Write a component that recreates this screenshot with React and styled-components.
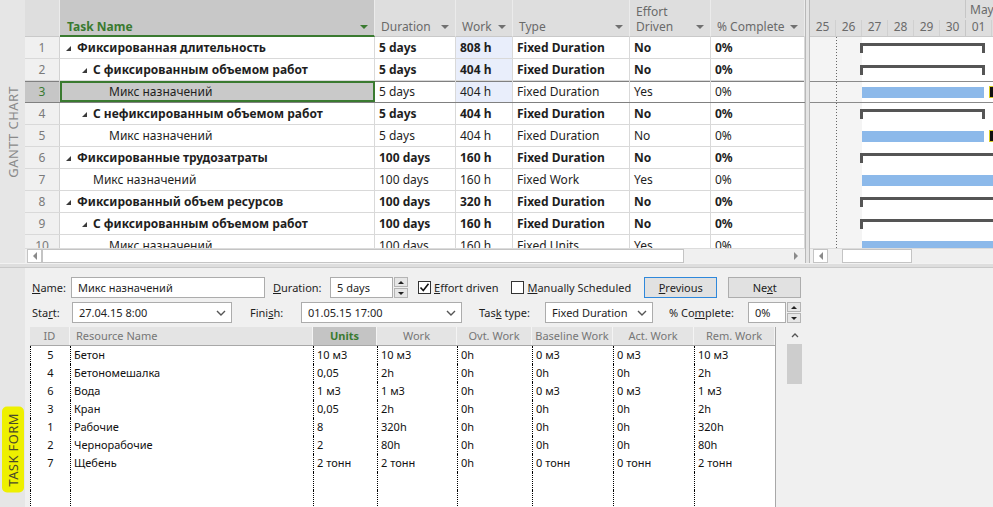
import React from 'react';
import styled, { createGlobalStyle, css } from 'styled-components';

const GlobalStyle = createGlobalStyle`
  html, body {
    margin: 0;
    padding: 0;
  }
  body {
    font-family: "Noto Sans", "Liberation Sans", sans-serif;
    font-size: 12px;
    color: #1e1e1e;
    overflow: hidden;
  }
`;

const TASK_COLS = '35px 315px 81px 57px 117px 81px 94px';
const RES_COLS = '40px 243px 64px 80px 75px 81px 81px 81px';
const GREEN = '#3a7a30';

const Screen = styled.div`
  width: 993px;
  height: 507px;
  display: flex;
  flex-direction: column;
  overflow: hidden;
  background: #e6e6e6;
`;

const GanttView = styled.div`
  height: 263px;
  display: flex;
  flex: none;
`;

const SideStrip = styled.div`
  width: 25px;
  flex: none;
  background: #e6e6e6;
  display: flex;
  justify-content: center;
  align-items: ${p => (p.$bottom ? 'flex-end' : 'center')};
  padding-bottom: ${p => (p.$bottom ? '14px' : '0')};
  box-sizing: border-box;
`;

const ViewLabel = styled.div`
  writing-mode: vertical-rl;
  transform: rotate(180deg);
  font-size: 13px;
  letter-spacing: 0.4px;
  color: ${p => (p.$marked ? '#4a4a2a' : '#8a8a8a')};
  white-space: nowrap;
  ${p =>
    p.$marked &&
    css`
      background: #eef000;
      padding: 6px 2px;
      border-radius: 5px;
    `}
`;

/* ---------- task sheet ---------- */

const SheetPane = styled.div`
  width: 780px;
  flex: none;
  display: flex;
  flex-direction: column;
  background: #fff;
`;

const SheetHeader = styled.div`
  display: grid;
  grid-template-columns: ${TASK_COLS};
  height: 37px;
  flex: none;
  background: #dedede;
`;

const HeadCell = styled.div`
  display: flex;
  align-items: flex-end;
  justify-content: space-between;
  padding: 0 6px 2px 6px;
  box-sizing: border-box;
  color: #6a6a6a;
  line-height: 15px;
  border-right: 1px solid #ebebeb;
  border-bottom: 1px solid #c9c9c9;
  ${p =>
    p.$active &&
    css`
      background: #c8c8c8;
      color: ${GREEN};
      font-weight: 700;
      padding-left: 7px;
      padding-bottom: 1px;
      border-bottom: 2px solid ${GREEN};
    `}
`;

const DropArrow = styled.span`
  flex: none;
  width: 0;
  height: 0;
  margin-bottom: 5px;
  border-left: 4px solid transparent;
  border-right: 4px solid transparent;
  border-top: 4px solid ${p => (p.$green ? GREEN : '#707070')};
`;

const SheetBody = styled.div`
  flex: 1;
  overflow: hidden;
`;

const TaskRow = styled.div`
  display: grid;
  grid-template-columns: ${TASK_COLS};
  height: 22px;
  box-sizing: border-box;
  border-bottom: 1px solid #d9d9d9;
  font-weight: ${p => (p.$bold ? 700 : 400)};
  ${p =>
    p.$selected &&
    css`
      border-bottom-color: #808080;
      & > div {
        box-shadow: inset 0 1px 0 #808080;
      }
    `}
`;

const Cell = styled.div`
  display: flex;
  align-items: center;
  padding: 0 4px;
  white-space: nowrap;
  overflow: hidden;
  border-right: 1px solid #d9d9d9;
  background: ${p => (p.$tint ? '#e9eefb' : 'transparent')};
`;

const RowNum = styled.div`
  display: flex;
  align-items: center;
  justify-content: center;
  font-weight: 400;
  color: ${p => (p.$selected ? GREEN : '#7a7a7a')};
  background: ${p => (p.$selected ? '#c6c6c6' : '#f0f0f0')};
  border-right: 1px solid #d2d2d2;
`;

const NameCell = styled(Cell)`
  padding-left: ${p => 5 + p.$level * 16}px;
  ${p =>
    p.$selected &&
    css`
      background: #c9c9c9;
      outline: 2px solid ${GREEN};
      outline-offset: -2px;
    `}
`;

const Spacer = styled.span`
  display: inline-block;
  width: 12px;
  flex: none;
`;

const ExpandGlyph = styled.span`
  flex: none;
  width: 0;
  height: 0;
  margin: 2px 6px 0 1px;
  border-style: solid;
  border-width: 0 0 5px 5px;
  border-color: transparent transparent #3a3a3a transparent;
`;

/* ---------- scroll bars ---------- */

const HScroll = styled.div`
  height: 15px;
  flex: none;
  display: flex;
  align-items: center;
  background: #f0f0f0;
  border-top: 1px solid #dcdcdc;
  box-sizing: border-box;
  padding: 0 2px;
`;

const ScrollBtn = styled.div`
  width: 15px;
  height: 14px;
  flex: none;
  display: flex;
  align-items: center;
  justify-content: center;
  box-sizing: border-box;
  background: ${p => (p.$flat ? 'transparent' : '#fff')};
  border: 1px solid ${p => (p.$flat ? 'transparent' : '#c4c4c4')};
  margin-left: ${p => p.$gap || 0}px;
`;

const Thumb = styled.div`
  height: 14px;
  flex: none;
  box-sizing: border-box;
  background: #fff;
  border: 1px solid #c4c4c4;
  margin-left: ${p => p.$gap || 0}px;
`;

const Tri = styled.span`
  width: 0;
  height: 0;
  border-top: 4px solid transparent;
  border-bottom: 4px solid transparent;
  ${p =>
    p.$right
      ? css`
          border-left: 4px solid #8a8a8a;
        `
      : css`
          border-right: 4px solid #8a8a8a;
        `}
`;

const Fill = styled.div`
  flex: 1;
`;

/* ---------- gantt chart ---------- */

const PaneDivider = styled.div`
  width: 5px;
  flex: none;
  box-sizing: border-box;
  background: #e4e4e4;
  border-left: 1px solid #b8b8b8;
  border-right: 1px solid #b8b8b8;
`;

const ChartPane = styled.div`
  flex: 1;
  min-width: 0;
  display: flex;
  flex-direction: column;
  overflow: hidden;
`;

const ChartHeader = styled.div`
  height: 37px;
  flex: none;
  background: #dedede;
  border-bottom: 1px solid #c9c9c9;
  box-sizing: border-box;
  display: flex;
  flex-direction: column;
  color: #6a6a6a;
`;

const Tier = styled.div`
  display: flex;
  height: ${p => p.$h}px;
  padding-top: ${p => p.$pad || 0}px;
  box-sizing: border-box;
`;

const MonthCell = styled.div`
  margin-left: ${p => p.$offset}px;
  padding-left: 4px;
  padding-top: 1px;
  border-left: 1px solid #c6c6c6;
  line-height: 17px;
  white-space: nowrap;
`;

const DayCell = styled.div`
  width: 26px;
  flex: none;
  box-sizing: border-box;
  border-right: 1px solid ${p => (p.$month ? '#c6c6c6' : '#d0d0d0')};
  text-align: center;
  line-height: 14px;
`;

const ChartBody = styled.div`
  flex: 1;
  overflow: hidden;
  background-color: #fff;
  background-image: repeating-linear-gradient(to bottom, #666 0 1px, transparent 1px 3px),
    linear-gradient(to right, #f4f4f4 0 52px, #fff 52px);
  background-size: 1px 100%, 100% 100%;
  background-position: 26px 0, 0 0;
  background-repeat: no-repeat;
`;

const ChartRow = styled.div`
  height: 22px;
  box-sizing: border-box;
  display: flex;
  align-items: flex-start;
  padding-top: 6px;
  white-space: nowrap;
  ${p =>
    p.$selected &&
    css`
      border-top: 1px solid #8a8a8a;
      border-bottom: 1px solid #8a8a8a;
      padding-top: 5px;
    `}
`;

const SummaryBar = styled.div`
  flex: none;
  height: 10px;
  box-sizing: border-box;
  border-top: 3px solid #555;
  border-left: 3px solid #555;
  border-right: ${p => (p.$open ? 'none' : '3px solid #555')};
`;

const TaskBar = styled.div`
  flex: none;
  height: 11px;
  background: #8cb9ea;
`;

const BarLabel = styled.div`
  flex: none;
  width: 4px;
  height: 10px;
  margin-left: 6px;
  background: #111;
  box-shadow: 0 0 0 1px #d8cc20;
`;

const ChartScroll = styled(HScroll)`
  padding-left: 3px;
`;

/* ---------- splitter + task form ---------- */

const Splitter = styled.div`
  height: 5px;
  flex: none;
  box-sizing: border-box;
  background: #dedede;
  border-top: 1px solid #f2f2f2;
  border-bottom: 1px solid #c9c9c9;
`;

const FormView = styled.div`
  flex: 1;
  display: flex;
  min-height: 0;
`;

const FormBody = styled.div`
  flex: 1;
  display: flex;
  flex-direction: column;
  background: #f0f0f0;
  padding: 9px 0 0 5px;
  min-width: 0;
  font-size: 11px;
  color: #1e1e1e;
`;

const FieldRow = styled.div`
  display: flex;
  align-items: center;
  height: 21px;
  padding-left: 2px;
  margin-bottom: ${p => p.$mb}px;
`;

const FieldLabel = styled.label`
  flex: none;
  width: ${p => p.$w}px;
  margin-left: ${p => p.$gap || 0}px;
  white-space: nowrap;
`;

const TextBox = styled.div`
  flex: none;
  width: ${p => p.$w}px;
  height: 21px;
  box-sizing: border-box;
  background: #fff;
  border: 1px solid #acacac;
  padding: 0 5px 0 6px;
  display: flex;
  align-items: center;
  justify-content: space-between;
  white-space: nowrap;
`;

const Spin = styled.div`
  flex: none;
  width: 14px;
  height: 21px;
  margin-left: 1px;
  display: flex;
  flex-direction: column;
  gap: 1px;
`;

const SpinHalf = styled.div`
  flex: 1;
  box-sizing: border-box;
  background: #e6e6e6;
  border: 1px solid #b4b4b4;
  display: flex;
  align-items: center;
  justify-content: center;
`;

const SpinTri = styled.span`
  width: 0;
  height: 0;
  border-left: 3px solid transparent;
  border-right: 3px solid transparent;
  ${p =>
    p.$down
      ? css`
          border-top: 3px solid #222;
        `
      : css`
          border-bottom: 3px solid #222;
        `}
`;

const CheckBox = styled.span`
  flex: none;
  width: 13px;
  height: 13px;
  box-sizing: border-box;
  background: #fff;
  border: 1px solid #333;
  margin-left: ${p => p.$gap || 0}px;
  margin-right: 3px;
  display: flex;
  align-items: center;
  justify-content: center;
`;

const CheckText = styled.span`
  white-space: nowrap;
`;

const Button = styled.div`
  flex: none;
  width: 73px;
  height: 21px;
  box-sizing: border-box;
  margin-left: ${p => p.$gap}px;
  background: #e1e1e1;
  border: 1px solid ${p => (p.$focus ? '#2f88db' : '#adadad')};
  display: flex;
  align-items: center;
  justify-content: center;
`;

const ResourceArea = styled.div`
  flex: 1;
  display: flex;
  align-items: stretch;
  min-height: 0;
`;

const ResTable = styled.div`
  flex: none;
  display: flex;
  flex-direction: column;
  background: #fff;
  border-right: 1px solid #a8a8a8;
  overflow: hidden;
`;

const ResHeadRow = styled.div`
  display: grid;
  grid-template-columns: ${RES_COLS};
  height: 19px;
  flex: none;
  box-sizing: border-box;
  background: #e4e4e4;
  border-bottom: 1px solid #a8a8a8;
  color: #767676;
`;

const ResHead = styled.div`
  line-height: 18px;
  text-align: ${p => (p.$left ? 'left' : 'center')};
  padding-left: ${p => (p.$left ? '6px' : '0')};
  border-right: 1px solid #f4f4f4;
  white-space: nowrap;
  overflow: hidden;
  ${p =>
    p.$active &&
    css`
      background: #c4c4c4;
      color: ${GREEN};
      font-weight: 700;
    `}
`;

const ResRow = styled.div`
  display: grid;
  grid-template-columns: ${RES_COLS};
  height: 18px;
  flex: none;
  color: #111;
`;

const ResCell = styled.div`
  line-height: 18px;
  padding-left: 3px;
  border-left: 1px dotted #000;
  text-align: ${p => (p.$center ? 'center' : 'left')};
  padding-right: ${p => (p.$center ? '3px' : '0')};
  white-space: nowrap;
  overflow: hidden;
`;

const VScroll = styled.div`
  width: 15px;
  flex: none;
  margin-left: 11px;
  display: flex;
  flex-direction: column;
  background: #f0f0f0;
`;

const VScrollBtn = styled.div`
  height: 17px;
  display: flex;
  align-items: center;
  justify-content: center;
`;

const VThumb = styled.div`
  height: 40px;
  background: #cdcdcd;
`;

/* ---------- data ---------- */

const tasks = [
  { id: 1, name: 'Фиксированная длительность', level: 0, summary: true, dur: '5 days', work: '808 h', type: 'Fixed Duration', eff: 'No', tint: true, bar: 'sum' },
  { id: 2, name: 'С фиксированным объемом работ', level: 1, summary: true, dur: '5 days', work: '404 h', type: 'Fixed Duration', eff: 'No', tint: true, bar: 'sum' },
  { id: 3, name: 'Микс назначений', level: 2, dur: '5 days', work: '404 h', type: 'Fixed Duration', eff: 'Yes', tint: true, selected: true, bar: 'task' },
  { id: 4, name: 'С нефиксированным объемом работ', level: 1, summary: true, dur: '5 days', work: '404 h', type: 'Fixed Duration', eff: 'No', bar: 'sum' },
  { id: 5, name: 'Микс назначений', level: 2, dur: '5 days', work: '404 h', type: 'Fixed Duration', eff: 'No', bar: 'task' },
  { id: 6, name: 'Фиксированные трудозатраты', level: 0, summary: true, dur: '100 days', work: '160 h', type: 'Fixed Duration', eff: 'No', bar: 'sumOpen' },
  { id: 7, name: 'Микс назначений', level: 1, dur: '100 days', work: '160 h', type: 'Fixed Work', eff: 'Yes', bar: 'taskOpen' },
  { id: 8, name: 'Фиксированный объем ресурсов', level: 0, summary: true, dur: '100 days', work: '320 h', type: 'Fixed Duration', eff: 'No', bar: 'sumOpen' },
  { id: 9, name: 'С фиксированным объемом работ', level: 1, summary: true, dur: '100 days', work: '160 h', type: 'Fixed Duration', eff: 'No', bar: 'sumOpen' },
  { id: 10, name: 'Микс назначений', level: 2, dur: '100 days', work: '160 h', type: 'Fixed Units', eff: 'Yes', bar: 'taskOpen' },
];

const headers = [
  { key: 'num', label: '' },
  { key: 'name', label: 'Task Name', active: true },
  { key: 'dur', label: 'Duration' },
  { key: 'work', label: 'Work' },
  { key: 'type', label: 'Type' },
  { key: 'eff', label: ['Effort', 'Driven'] },
  { key: 'pct', label: '% Complete' },
];

const days = ['25', '26', '27', '28', '29', '30', '01'];

const resources = [
  ['5', 'Бетон', '10 м3', '10 м3', '0h', '0 м3', '0 м3', '10 м3'],
  ['4', 'Бетономешалка', '0,05', '2h', '0h', '0h', '0h', '2h'],
  ['6', 'Вода', '1 м3', '1 м3', '0h', '0 м3', '0 м3', '1 м3'],
  ['3', 'Кран', '0,05', '2h', '0h', '0h', '0h', '2h'],
  ['1', 'Рабочие', '8', '320h', '0h', '0h', '0h', '320h'],
  ['2', 'Чернорабочие', '2', '80h', '0h', '0h', '0h', '80h'],
  ['7', 'Щебень', '2 тонн', '2 тонн', '0h', '0 тонн', '0 тонн', '2 тонн'],
  ['', '', '', '', '', '', '', ''],
  ['', '', '', '', '', '', '', ''],
];

const resHeaders = ['ID', 'Resource Name', 'Units', 'Work', 'Ovt. Work', 'Baseline Work', 'Act. Work', 'Rem. Work'];

// bar geometry in px from the chart's left edge (day 25 starts at 0, 26px a day)
const barShapes = {
  sum: { left: 50, width: 125 },
  sumOpen: { left: 50, width: 240 },
  task: { left: 52, width: 122 },
  taskOpen: { left: 52, width: 240 },
};

function Chevron() {
  return (
    <svg width="10" height="6" viewBox="0 0 10 6">
      <path d="M1 1 L5 5 L9 1" fill="none" stroke="#555" strokeWidth="1.4" />
    </svg>
  );
}

function Tick() {
  return (
    <svg width="11" height="11" viewBox="0 0 11 11">
      <path d="M1.5 5.5 L4.3 8.5 L9.5 1.8" fill="none" stroke="#111" strokeWidth="1.6" />
    </svg>
  );
}

function Spinner() {
  return (
    <Spin>
      <SpinHalf>
        <SpinTri />
      </SpinHalf>
      <SpinHalf>
        <SpinTri $down />
      </SpinHalf>
    </Spin>
  );
}

function GanttBar({ kind }) {
  const shape = barShapes[kind];
  const style = { marginLeft: shape.left, width: shape.width };
  if (kind === 'sum' || kind === 'sumOpen') {
    return <SummaryBar style={style} $open={kind === 'sumOpen'} />;
  }
  return (
    <>
      <TaskBar style={style} />
      {kind === 'task' && <BarLabel />}
    </>
  );
}

function TaskSheet() {
  return (
    <SheetPane>
      <SheetHeader>
        {headers.map(h => (
          <HeadCell key={h.key} $active={h.active}>
            <span>
              {Array.isArray(h.label)
                ? h.label.map(l => (
                    <div key={l}>{l}</div>
                  ))
                : h.label}
            </span>
            {h.key !== 'num' && <DropArrow $green={h.active} />}
          </HeadCell>
        ))}
      </SheetHeader>
      <SheetBody>
        {tasks.map(t => (
          <TaskRow key={t.id} $bold={t.summary} $selected={t.selected}>
            <RowNum $selected={t.selected}>{t.id}</RowNum>
            <NameCell $level={t.level} $selected={t.selected}>
              {t.summary ? <ExpandGlyph /> : <Spacer />}
              {t.name}
            </NameCell>
            <Cell>{t.dur}</Cell>
            <Cell $tint={t.tint}>{t.work}</Cell>
            <Cell>{t.type}</Cell>
            <Cell>{t.eff}</Cell>
            <Cell>0%</Cell>
          </TaskRow>
        ))}
      </SheetBody>
      <HScroll>
        <ScrollBtn>
          <Tri />
        </ScrollBtn>
        <Thumb style={{ width: 642 }} />
        <Fill />
        <ScrollBtn $flat>
          <Tri $right />
        </ScrollBtn>
      </HScroll>
    </SheetPane>
  );
}

function GanttChart() {
  return (
    <ChartPane>
      <ChartHeader>
        <Tier $h={18}>
          <MonthCell $offset={155}>May</MonthCell>
        </Tier>
        <Tier $h={18} $pad={2}>
          {days.map((d, i) => (
            <DayCell key={d} $month={i === 5}>
              {d}
            </DayCell>
          ))}
        </Tier>
      </ChartHeader>
      <ChartBody>
        {tasks.map(t => (
          <ChartRow key={t.id} $selected={t.selected}>
            <GanttBar kind={t.bar} />
          </ChartRow>
        ))}
      </ChartBody>
      <ChartScroll>
        <ScrollBtn>
          <Tri />
        </ScrollBtn>
        <Thumb $gap={14} style={{ width: 70 }} />
      </ChartScroll>
    </ChartPane>
  );
}

function TaskForm() {
  return (
    <FormBody>
      <FieldRow $mb={4}>
        <FieldLabel $w={39}>
          <u>N</u>ame:
        </FieldLabel>
        <TextBox $w={194}>Микс назначений</TextBox>
        <FieldLabel $w={57} $gap={8}>
          <u>D</u>uration:
        </FieldLabel>
        <TextBox $w={63}>5 days</TextBox>
        <Spinner />
        <CheckBox $gap={10}>
          <Tick />
        </CheckBox>
        <CheckText>
          <u>E</u>ffort driven
        </CheckText>
        <CheckBox $gap={13} />
        <CheckText>
          <u>M</u>anually Scheduled
        </CheckText>
        <Button $gap={13} $focus>
          <span>
            <u>P</u>revious
          </span>
        </Button>
        <Button $gap={11}>
          <span>
            Ne<u>x</u>t
          </span>
        </Button>
      </FieldRow>
      <FieldRow $mb={4}>
        <FieldLabel $w={40}>
          Sta<u>r</u>t:
        </FieldLabel>
        <TextBox $w={160}>
          27.04.15 8:00
          <Chevron />
        </TextBox>
        <FieldLabel $w={51} $gap={18}>
          Fini<u>s</u>h:
        </FieldLabel>
        <TextBox $w={161}>
          01.05.15 17:00
          <Chevron />
        </TextBox>
        <FieldLabel $w={66} $gap={17}>
          Tas<u>k</u> type:
        </FieldLabel>
        <TextBox $w={108}>
          Fixed Duration
          <Chevron />
        </TextBox>
        <FieldLabel $w={79} $gap={16}>
          % Co<u>m</u>plete:
        </FieldLabel>
        <TextBox $w={38}>0%</TextBox>
        <Spinner />
      </FieldRow>
      <ResourceArea>
        <ResTable>
          <ResHeadRow>
            {resHeaders.map((h, i) => (
              <ResHead key={h} $left={i === 1} $active={h === 'Units'}>
                {h}
              </ResHead>
            ))}
          </ResHeadRow>
          {resources.map((r, ri) => (
            <ResRow key={ri}>
              {r.map((v, ci) => (
                <ResCell key={ci} $center={ci === 0}>
                  {v}
                </ResCell>
              ))}
            </ResRow>
          ))}
        </ResTable>
        <VScroll>
          <VScrollBtn>
            <svg width="8" height="5" viewBox="0 0 8 5">
              <path d="M1 4 L4 1 L7 4" fill="none" stroke="#555" strokeWidth="1.3" />
            </svg>
          </VScrollBtn>
          <VThumb />
        </VScroll>
      </ResourceArea>
    </FormBody>
  );
}

export default function App() {
  return (
    <Screen>
      <GlobalStyle />
      <GanttView>
        <SideStrip>
          <ViewLabel>GANTT CHART</ViewLabel>
        </SideStrip>
        <TaskSheet />
        <PaneDivider />
        <GanttChart />
      </GanttView>
      <Splitter />
      <FormView>
        <SideStrip $bottom>
          <ViewLabel $marked>TASK FORM</ViewLabel>
        </SideStrip>
        <TaskForm />
      </FormView>
    </Screen>
  );
}
